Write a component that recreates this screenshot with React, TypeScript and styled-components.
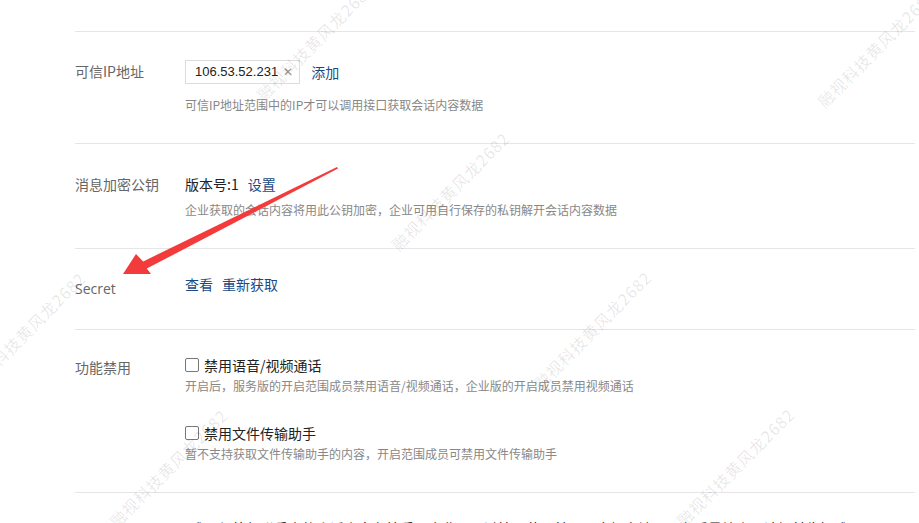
import React from 'react';
import styled, { createGlobalStyle } from 'styled-components';

const GlobalStyle = createGlobalStyle`
  html, body {
    margin: 0;
    padding: 0;
    background: #fff;
  }
  body {
    font-family: "Noto Sans CJK SC", "Noto Sans", sans-serif;
    overflow: hidden;
  }
`;

const Page = styled.div`
  position: relative;
  width: 919px;
  height: 523px;
  overflow: hidden;
  background: #fff;
`;

const Settings = styled.div`
  margin-left: 75px;
  width: 840px;
  padding-top: 31px;
`;

const Section = styled.section<{ $top: number; $bottom: number }>`
  display: flex;
  align-items: flex-start;
  border-top: 1px solid #e6e6e6;
  padding: ${(p) => p.$top}px 0 ${(p) => p.$bottom}px;
`;

const Label = styled.div<{ $latin?: boolean; $offset?: number }>`
  width: 110px;
  flex-shrink: 0;
  font-size: 14px;
  line-height: 20px;
  color: #666;
  margin-top: ${(p) => p.$offset ?? 0}px;
  font-family: ${(p) =>
    p.$latin ? '"Open Sans", "Noto Sans", sans-serif' : '"Noto Sans CJK SC", sans-serif'};
`;

const Body = styled.div`
  display: flex;
  flex-direction: column;
`;

const Line = styled.div<{ $gap: number }>`
  display: flex;
  align-items: center;
  gap: ${(p) => p.$gap}px;
  font-size: 14px;
  line-height: 20px;
  color: #222;
`;

const Tag = styled.span`
  display: inline-flex;
  align-items: center;
  height: 22px;
  padding: 0 6px 0 9px;
  border: 1px solid #dcdcdc;
  font-family: "Liberation Sans", Arial, sans-serif;
  font-size: 13px;
  color: #222;
  gap: 5px;
`;

const Close = styled.span`
  font-size: 12px;
  color: #999;
  line-height: 1;
`;

const Link = styled.a`
  color: #1a4a86;
  font-size: 14px;
  text-decoration: none;
  cursor: pointer;
`;

const Hint = styled.div<{ $gap: number }>`
  margin-top: ${(p) => p.$gap}px;
  font-size: 12px;
  line-height: 18px;
  color: #888;
`;

const Option = styled.label<{ $gap?: number }>`
  display: flex;
  align-items: center;
  gap: 5px;
  margin-top: ${(p) => p.$gap ?? 0}px;
  font-size: 14px;
  line-height: 20px;
  color: #222;
`;

const Box = styled.span`
  width: 12px;
  height: 12px;
  border: 1px solid #777;
  border-radius: 2px;
  background: #fff;
`;

const CutText = styled.div`
  padding-left: 115px;
  font-size: 14px;
  line-height: 20px;
  color: #111;
  white-space: nowrap;
`;

const Watermark = styled.span`
  position: absolute;
  transform: translate(-50%, -50%) rotate(-45deg);
  font-size: 16px;
  letter-spacing: 1px;
  color: rgba(0, 0, 0, 0.1);
  white-space: nowrap;
  pointer-events: none;
`;

const ArrowLayer = styled.svg`
  position: absolute;
  left: 0;
  top: 0;
  pointer-events: none;
`;

const marks = [
  [315, 41],
  [876, 48],
  [450, 191],
  [26, 331],
  [592, 330],
  [168, 468],
  [735, 467],
];

export default function App() {
  return (
    <Page>
      <GlobalStyle />
      <Settings>
        <Section $top={28} $bottom={29}>
          <Label $offset={1}>可信IP地址</Label>
          <Body>
            <Line $gap={11}>
              <Tag>
                106.53.52.231 <Close>✕</Close>
              </Tag>
              <Link>添加</Link>
            </Line>
            <Hint $gap={12}>可信IP地址范围中的IP才可以调用接口获取会话内容数据</Hint>
          </Body>
        </Section>

        <Section $top={30} $bottom={29}>
          <Label>消息加密公钥</Label>
          <Body>
            <Line $gap={9}>
              <span>版本号:1</span>
              <Link>设置</Link>
            </Line>
            <Hint $gap={7}>企业获取的会话内容将用此公钥加密，企业可用自行保存的私钥解开会话内容数据</Hint>
          </Body>
        </Section>

        <Section $top={25} $bottom={30}>
          <Label $latin $offset={5}>Secret</Label>
          <Body>
            <Line $gap={9}>
              <Link>查看</Link>
              <Link>重新获取</Link>
            </Line>
          </Body>
        </Section>

        <Section $top={25} $bottom={29}>
          <Label $offset={2}>功能禁用</Label>
          <Body>
            <Option>
              <Box />
              禁用语音/视频通话
            </Option>
            <Hint $gap={2}>开启后，服务版的开启范围成员禁用语音/视频通话，企业版的开启成员禁用视频通话</Hint>
            <Option $gap={28}>
              <Box />
              禁用文件传输助手
            </Option>
            <Hint $gap={2}>暂不支持获取文件传输助手的内容，开启范围成员可禁用文件传输助手</Hint>
          </Body>
        </Section>

        <Section $top={25} $bottom={20}>
          <CutText>
            成员与外部联系人的会话内容存档后，企业可通过接口获取并用于合规审计及服务质量检查，请提前告知成员
          </CutText>
        </Section>
      </Settings>

      {marks.map(([x, y], i) => (
        <Watermark key={i} style={{ left: x, top: y }}>
          融视科技黄风龙2682
        </Watermark>
      ))}

      <ArrowLayer width={919} height={523} viewBox="0 0 919 523">
        <polygon
          points="123,274 136,254 143.2,261.4 337,167 338,168.5 146.8,268.6 151,274"
          fill="#f33b3b"
        />
      </ArrowLayer>
    </Page>
  );
}
